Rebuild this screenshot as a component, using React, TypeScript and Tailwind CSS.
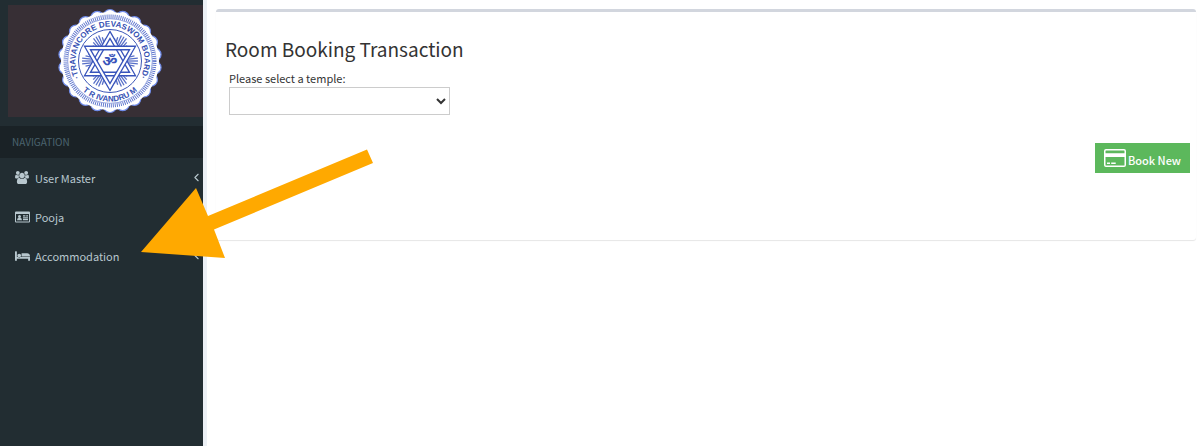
import React, { useState } from 'react';
import { FiChevronLeft } from 'react-icons/fi';

interface NavItem {
    id: string;
    name: string;
    icon: React.ReactNode;
    hasChildren?: boolean;
}

const UsersIcon: React.FC = () => (
    <svg viewBox="0 0 1920 1792" className="w-3.5 h-[13px]" fill="currentColor" aria-hidden="true">
        <path d="M593 896q-162 5-265 128h-134q-82 0-138-40.500t-56-118.500q0-353 124-353 6 0 43.500 21t97.500 42.500 119 21.500q67 0 133-23-5 37-5 66 0 139 81 256zM1664 1533q0 120-73 189.500t-194 69.500h-874q-121 0-194-69.500t-73-189.500q0-53 3.500-103.500t14-109 26.500-108.500 43-97.500 62-81 85.500-53.500 111.500-20q10 0 43 21.500t73 48 107 48 135 21.500 135-21.500 107-48 73-48 43-21.500q61 0 111.500 20t85.500 53.500 62 81 43 97.500 26.500 108.500 14 109 3.500 103.500zM640 256q0 106-75 181t-181 75-181-75-75-181 75-181 181-75 181 75 75 181zM1344 640q0 159-112.500 271.500t-271.500 112.500-271.500-112.500-112.500-271.500 112.500-271.500 271.500-112.500 271.500 112.500 112.500 271.500zM1920 865q0 78-56 118.500t-138 40.500h-134q-103-123-265-128 81-117 81-256 0-29-5-66 66 23 133 23 59 0 119-21.500t97.500-42.500 43.500-21q124 0 124 353zM1792 256q0 106-75 181t-181 75-181-75-75-181 75-181 181-75 181 75 75 181z" />
    </svg>
);

const IdCardIcon: React.FC = () => (
    <svg viewBox="0 0 15 12" className="w-[15px] h-3" fill="currentColor" aria-hidden="true">
        <path fillRule="evenodd" d="M1 .5h13q1 0 1 1v9q0 1-1 1H1q-1 0-1-1v-9q0-1 1-1zM1 3v7.500h13V3z" />
        <circle cx="4.500" cy="5.500" r="1.500" />
        <path d="M2 9.200q0-2.400 2.500-2.400T7 9.200zM8 4.200h2.500v1.200H8zM11.200 4.200H13v1.200h-1.800zM8 6.200h5v1.200H8zM8 8.100h5v1.200H8z" />
    </svg>
);

const BedIcon: React.FC = () => (
    <svg viewBox="0 128 2048 1536" className="w-[15px] h-3" fill="currentColor" aria-hidden="true">
        <path d="M256 1024h1728q26 0 45 19t19 45v448h-256v-256h-1536v256h-256v-1216q0-26 19-45t45-19h128q26 0 45 19t19 45v704zM832 832q0-106-75-181t-181-75-181 75-75 181 75 181 181 75 181-75 75-181zM2048 960v-64q0-159-112.500-271.500t-271.500-112.500h-704q-26 0-45 19t-19 45v384h1152z" />
    </svg>
);

const CreditCardIcon: React.FC = () => (
    <svg viewBox="0 0 22 18" className="w-[22px] h-[18px]" fill="currentColor" aria-hidden="true">
        <path fillRule="evenodd" d="M2 0h18q2 0 2 2v14q0 2-2 2H2q-2 0-2-2V2q0-2 2-2zM2 1.500q-.5 0-.5.5v2.200h19V2q0-.5-.5-.5zM1.500 8v8q0 .5.5.5h18q.5 0 .5-.5V8z" />
        <path d="M3 13.500h3V15H3zM7.200 13.500h4.500V15H7.200z" />
    </svg>
);

const LOBES = Array.from({ length: 22 }, (_, i) => (i * 2 * Math.PI) / 22);
const RAYS = [30, 90, 150, 210, 270, 330];

/**
 * Round board seal: scalloped rim, ticked ring, curved lettering and a woven star.
 */
const BoardSeal: React.FC = () => (
    <svg viewBox="-54 -54 108 108" className="w-[108px] h-[108px]" role="img" aria-label="Travancore Devaswom Board, Trivandrum">
        <defs>
            <path id="seal-top" d="M-24.400 24.400A34.500 34.500 0 1 1 24.400 24.400" />
            <path id="seal-bottom" d="M-34 22A40.500 40.500 0 0 0 34 22" />
        </defs>
        {LOBES.map(a => (
            <circle key={a} cx={Math.sin(a) * 45} cy={-Math.cos(a) * 45} r="6.500" fill="#fff" stroke="#6f8bea" strokeWidth="1.200" />
        ))}
        <circle r="49" fill="#fff" />
        <circle r="44.500" fill="none" stroke="#5a72cc" strokeWidth="4" strokeDasharray="0.900 1.100" />
        <circle r="42.300" fill="none" stroke="#5a72cc" strokeWidth="0.600" />
        <circle r="31.500" fill="none" stroke="#3e58b8" strokeWidth="1" />

        {/* Fans between the star points */}
        {RAYS.map(deg => (
            <g key={deg} transform={`rotate(${deg})`} stroke="#5870c8" strokeWidth="1.300">
                {[-18, -12, -6, 0, 6, 12, 18].map(r => (
                    <line key={r} x1="0" y1="-14" x2="0" y2={Math.abs(r) > 12 ? -23 : Math.abs(r) > 6 ? -25 : -28} transform={`rotate(${r})`} />
                ))}
            </g>
        ))}

        {/* Two interlaced triangles, each a white band with a blue edge */}
        <g strokeLinejoin="miter">
            <path d="M0-30L26 15H-26zM0 30L26-15H-26z" fill="#fff" />
            <g fill="none">
                <path d="M0-26L22.500 13H-22.500z" stroke="#3854bb" strokeWidth="4.800" />
                <path d="M0-26L22.500 13H-22.500z" stroke="#fff" strokeWidth="2.200" />
                <path d="M0 26L22.500-13H-22.500z" stroke="#3854bb" strokeWidth="4.800" />
                <path d="M0 26L22.500-13H-22.500z" stroke="#fff" strokeWidth="2.200" />
            </g>
        </g>
        <text y="5" textAnchor="middle" fill="#3854bb" className="text-[15px] font-bold font-['Noto_Sans','Noto_Sans_Devanagari',sans-serif]">ॐ</text>

        <g fill="#3550b3" className="font-['Liberation_Sans',sans-serif] font-bold">
            <text className="text-[8px]" textAnchor="middle">
                <textPath href="#seal-top" startOffset="50%">·TRAVANCORE DEVASWOM BOARD·</textPath>
            </text>
            <text className="text-[8px]" textAnchor="middle">
                <textPath href="#seal-bottom" startOffset="50%">T R IVANDRU M</textPath>
            </text>
        </g>
    </svg>
);

const NAV_ITEMS: NavItem[] = [
    { id: 'users', name: 'User Master', icon: <UsersIcon />, hasChildren: true },
    { id: 'pooja', name: 'Pooja', icon: <IdCardIcon /> },
    { id: 'accommodation', name: 'Accommodation', icon: <BedIcon />, hasChildren: true },
];

const Sidebar: React.FC = () => (
    <aside className="w-[203px] shrink-0 bg-[#222d32]">
        <div className="pt-[5px] pl-2 pb-[9px]">
            <div className="h-28 bg-[#372f35] flex items-center justify-center pl-2">
                <BoardSeal />
            </div>
        </div>
        <h2 className="h-8 px-3 flex items-center bg-[#1a2226] text-[10px] leading-4 text-[#4b646f]">NAVIGATION</h2>
        <nav>
            {NAV_ITEMS.map(item => (
                <a key={item.id} href={`#${item.id}`} className="h-[39px] pl-[15px] flex items-center text-[11px] leading-5 text-[#b8c7ce]">
                    <span className="w-5 shrink-0">{item.icon}</span>
                    <span className="flex-1">{item.name}</span>
                    {item.hasChildren && <FiChevronLeft size={13} />}
                </a>
            ))}
        </nav>
    </aside>
);

const App: React.FC = () => {
    const [temple, setTemple] = useState('');

    return (
        <div className="relative min-h-screen flex bg-white text-[#333] font-['Noto_Sans_CJK_JP','Noto_Sans_CJK_SC',sans-serif]">
            <Sidebar />
            <main className="flex-1 border-l-4 border-[#ecf0f5] pt-[9px] pl-[9px] pr-1">
                <section className="rounded-[3px] border-t-3 border-[#d2d6de] shadow-[0_1px_1px_rgba(0,0,0,0.1)] px-[9px] pt-[23px] pb-[67px]">
                    <h1 className="text-[19px] leading-7">Room Booking Transaction</h1>
                    <div className="pl-1 pt-[7px] flex flex-col items-start gap-px">
                        <label htmlFor="temple" className="text-[11px] leading-4">Please select a temple:</label>
                        <select
                            id="temple"
                            value={temple}
                            onChange={e => setTemple(e.target.value)}
                            className="w-[221px] h-7 bg-white border border-[#ccc] text-[12px] text-[#333]"
                        >
                            <option value=""></option>
                        </select>
                    </div>
                    <div className="pt-7 flex justify-end">
                        <button type="button" className="h-[30px] mr-[-3px] px-[9px] flex items-center gap-[2px] bg-[#5cb85c] text-white text-[11px] leading-5 font-medium">
                            <CreditCardIcon />
                            <span className="pt-1">Book New</span>
                        </button>
                    </div>
                </section>
            </main>

            {/* Callout arrow pointing at the Accommodation entry */}
            <svg viewBox="0 0 232 109" className="absolute left-[141px] top-[149px] w-[232px] h-[109px] pointer-events-none" fill="#ffa900" aria-hidden="true">
                <path d="M0 103L55 39L67 67L226 .5L232 14L73 80.500L84 109z" />
            </svg>
        </div>
    );
};

export default App;
